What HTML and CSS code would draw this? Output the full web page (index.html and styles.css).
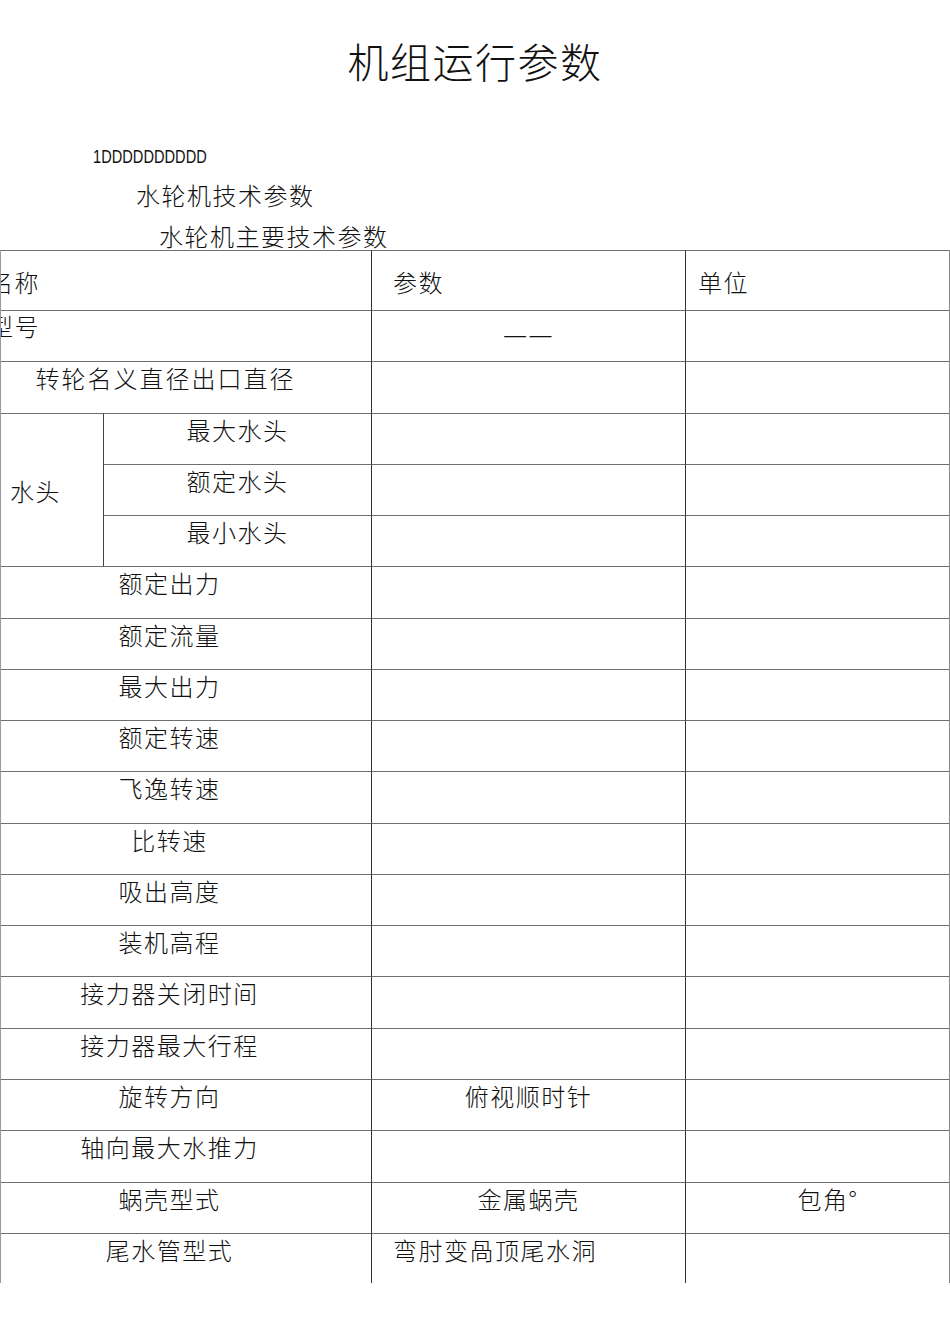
FILE: index.html
```html
<!DOCTYPE html>
<html lang="zh-CN">
<head>
<meta charset="utf-8">
<title>机组运行参数</title>
<link rel="stylesheet" href="styles.css">
</head>
<body>
<h1 class="title">机组运行参数</h1>
<p class="code"><span class="code-text">1DDDDDDDDDD</span></p>
<p class="sub sub1">水轮机技术参数</p>
<p class="sub sub2">水轮机主要技术参数</p>
<div class="sheet">
  <div class="grid">
    <div class="c name left head">名称</div>
    <div class="c val left head">参数</div>
    <div class="c unit head unit-left">单位</div>

    <div class="c name left top2">型号</div>
    <div class="c val dash">一一</div>
    <div class="c unit"></div>

    <div class="c name spaced">转轮名义直径出口直径</div>
    <div class="c val"></div>
    <div class="c unit"></div>

    <div class="c group">水头</div>
    <div class="c subname">最大水头</div>
    <div class="c val"></div>
    <div class="c unit"></div>
    <div class="c subname">额定水头</div>
    <div class="c val"></div>
    <div class="c unit"></div>
    <div class="c subname">最小水头</div>
    <div class="c val"></div>
    <div class="c unit"></div>

    <div class="c name">额定出力</div><div class="c val"></div><div class="c unit"></div>
    <div class="c name">额定流量</div><div class="c val"></div><div class="c unit"></div>
    <div class="c name">最大出力</div><div class="c val"></div><div class="c unit"></div>
    <div class="c name">额定转速</div><div class="c val"></div><div class="c unit"></div>
    <div class="c name">飞逸转速</div><div class="c val"></div><div class="c unit"></div>
    <div class="c name">比转速</div><div class="c val"></div><div class="c unit"></div>
    <div class="c name">吸出高度</div><div class="c val"></div><div class="c unit"></div>
    <div class="c name">装机高程</div><div class="c val"></div><div class="c unit"></div>
    <div class="c name">接力器关闭时间</div><div class="c val"></div><div class="c unit"></div>
    <div class="c name">接力器最大行程</div><div class="c val"></div><div class="c unit"></div>
    <div class="c name">旋转方向</div><div class="c val">俯视顺时针</div><div class="c unit"></div>
    <div class="c name">轴向最大水推力</div><div class="c val"></div><div class="c unit"></div>
    <div class="c name">蜗壳型式</div><div class="c val">金属蜗壳</div><div class="c unit angle">包角°</div>
    <div class="c name">尾水管型式</div><div class="c val left">弯肘变咼顶尾水洞</div><div class="c unit"></div>
  </div>
</div>
</body>
</html>
```

FILE: styles.css
```css
html, body {
  margin: 0;
  padding: 0;
  background: #fff;
}

body {
  width: 950px;
  color: #111;
  font-family: "Noto Sans CJK SC", "Noto Sans", sans-serif;
  font-weight: 300;
}

.title {
  margin: 0;
  padding-top: 38px;
  font-size: 41px;
  line-height: 44px;
  font-weight: 300;
  letter-spacing: 1.5px;
  text-align: center;
}

.code {
  margin: 65px 0 0;
  padding-left: 93px;
  height: 20px;
  font-family: "Liberation Sans", sans-serif;
  font-size: 19px;
  line-height: 20px;
}

.code-text {
  display: inline-block;
  transform: scaleX(0.77);
  transform-origin: left center;
}

.sub {
  margin: 0;
  font-size: 24px;
  line-height: 26px;
  letter-spacing: 1.5px;
}

.sub1 {
  margin-top: 15px;
  padding-left: 136px;
}

.sub2 {
  margin-top: 15px;
  padding-left: 159px;
}

.sheet {
  box-sizing: border-box;
  width: 950px;
  height: 1033px;
  margin-top: 1px;
  overflow: hidden;
  border-left: 1px solid #9a9a9a;
  border-right: 1px solid #8a8a8a;
}

.grid {
  margin-left: -33px;
  width: 993px;
  display: grid;
  grid-template-columns: 136px 268px 314px 275px;
  grid-template-rows: 60px repeat(18, 51.28px) 50px;
}

.c {
  box-sizing: border-box;
  border-top: 1px solid #6e6e6e;
  padding-top: 3px;
  font-size: 24px;
  line-height: 26px;
  letter-spacing: 1.5px;
  text-align: center;
  white-space: nowrap;
}

.name {
  grid-column: 1 / span 2;
  border-right: 1px solid #333;
}

.spaced {
  letter-spacing: 2px;
  padding-right: 8px;
}

.val {
  border-right: 1px solid #333;
}

.left {
  text-align: left;
  padding-left: 21px;
}

.unit-left {
  text-align: left;
  padding-left: 12px;
}

.angle {
  padding-left: 9px;
}

.head {
  padding-top: 18px;
}

.top2 {
  padding-top: 2px;
}

.dash {
  padding-top: 12px;
}

.group {
  grid-column: 1;
  grid-row: span 3;
  border-right: 1px solid #444;
  display: flex;
  align-items: center;
  justify-content: center;
  padding-top: 3px;
}

.subname {
  grid-column: 2;
  border-right: 1px solid #333;
}
```
